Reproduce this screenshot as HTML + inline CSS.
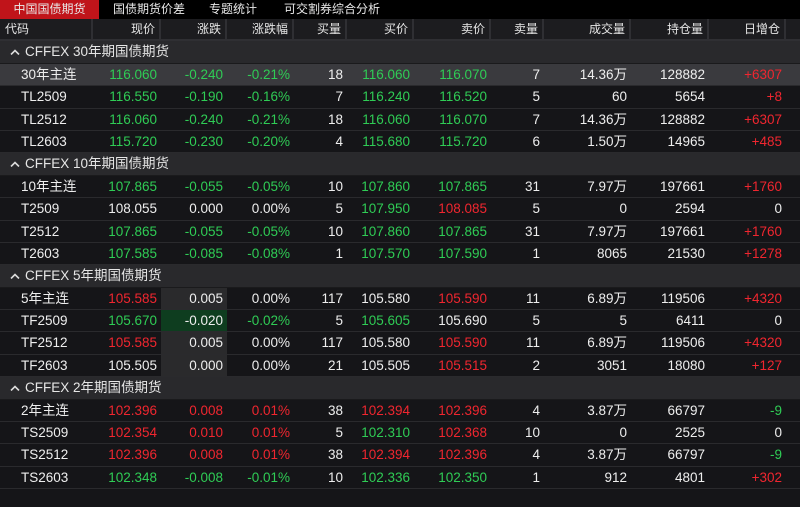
<!DOCTYPE html>
<html><head><meta charset="utf-8"><style>
*{margin:0;padding:0;box-sizing:border-box}
body{width:800px;height:507px;background:#151518;font-family:"Liberation Sans","Noto Sans CJK SC",sans-serif;color:#eee;overflow:hidden;position:relative}
.tabs{height:19px;background:#000;display:flex;font-size:12px;color:#e8e8e8}
.tabs div{height:19px;line-height:18px;padding:0 0}
.t0{width:99px;background:#c0141a;text-align:center}
.t1{width:100px;text-align:center}
.t2{width:60px;text-align:center;margin-left:4px}
.t3{width:130px;text-align:center;margin-left:4px}
.row{display:flex;height:22.4px;line-height:21px;border-bottom:1px solid #2a2a2d;font-size:13.5px;background:#151518}
.row div{text-align:right;padding-right:4px;white-space:nowrap}
.row div:first-child{text-align:left;padding-left:21px}
.hd{background:#1c1c1f;font-size:12px;color:#e6e6e6;border-bottom:2px solid #2f2f33}
.hd div{border-right:2px solid #2f2f33}
.hd div:first-child{padding-left:5px}
.grp{background:#29292c;font-size:13.5px;line-height:21px;height:22.4px;padding-left:10px;color:#e6e6e6;border-bottom:1px solid #1a1a1c}
.grp svg{vertical-align:1px;margin-right:5px}
.sel{background:#3a3a3e}
.c0{width:93px}.c1{width:68px}.c2{width:66px}.c3{width:67px}.c4{width:53px}.c5{width:67px}.c6{width:77px}.c7{width:53px}.c8{width:87px}.c9{width:78px}.c10{width:77px}
.g{color:#2fcc55}.r{color:#f0262f}
.gb{background:#2a2a2c}.gg{background:#0e3d1f}
</style></head><body>
<div class="tabs"><div class="t0">中国国债期货</div><div class="t1">国债期货价差</div><div class="t2">专题统计</div><div class="t3">可交割券综合分析</div></div>
<div class="row hd"><div class="c0">代码</div><div class="c1">现价</div><div class="c2">涨跌</div><div class="c3">涨跌幅</div><div class="c4">买量</div><div class="c5">买价</div><div class="c6">卖价</div><div class="c7">卖量</div><div class="c8">成交量</div><div class="c9">持仓量</div><div class="c10">日增仓</div></div>

<div class="grp"><svg width="10" height="6" viewBox="0 0 10 6"><path d="M1 5.5L5 1.5L9 5.5" stroke="#ddd" stroke-width="1.6" fill="none"/></svg>CFFEX 30年期国债期货</div>
<div class="row sel"><div class="c0">30年主连</div><div class="c1 g">116.060</div><div class="c2 g">-0.240</div><div class="c3 g">-0.21%</div><div class="c4">18</div><div class="c5 g">116.060</div><div class="c6 g">116.070</div><div class="c7">7</div><div class="c8">14.36万</div><div class="c9">128882</div><div class="c10 r">+6307</div></div>
<div class="row"><div class="c0">TL2509</div><div class="c1 g">116.550</div><div class="c2 g">-0.190</div><div class="c3 g">-0.16%</div><div class="c4">7</div><div class="c5 g">116.240</div><div class="c6 g">116.520</div><div class="c7">5</div><div class="c8">60</div><div class="c9">5654</div><div class="c10 r">+8</div></div>
<div class="row"><div class="c0">TL2512</div><div class="c1 g">116.060</div><div class="c2 g">-0.240</div><div class="c3 g">-0.21%</div><div class="c4">18</div><div class="c5 g">116.060</div><div class="c6 g">116.070</div><div class="c7">7</div><div class="c8">14.36万</div><div class="c9">128882</div><div class="c10 r">+6307</div></div>
<div class="row"><div class="c0">TL2603</div><div class="c1 g">115.720</div><div class="c2 g">-0.230</div><div class="c3 g">-0.20%</div><div class="c4">4</div><div class="c5 g">115.680</div><div class="c6 g">115.720</div><div class="c7">6</div><div class="c8">1.50万</div><div class="c9">14965</div><div class="c10 r">+485</div></div>

<div class="grp"><svg width="10" height="6" viewBox="0 0 10 6"><path d="M1 5.5L5 1.5L9 5.5" stroke="#ddd" stroke-width="1.6" fill="none"/></svg>CFFEX 10年期国债期货</div>
<div class="row"><div class="c0">10年主连</div><div class="c1 g">107.865</div><div class="c2 g">-0.055</div><div class="c3 g">-0.05%</div><div class="c4">10</div><div class="c5 g">107.860</div><div class="c6 g">107.865</div><div class="c7">31</div><div class="c8">7.97万</div><div class="c9">197661</div><div class="c10 r">+1760</div></div>
<div class="row"><div class="c0">T2509</div><div class="c1">108.055</div><div class="c2">0.000</div><div class="c3">0.00%</div><div class="c4">5</div><div class="c5 g">107.950</div><div class="c6 r">108.085</div><div class="c7">5</div><div class="c8">0</div><div class="c9">2594</div><div class="c10">0</div></div>
<div class="row"><div class="c0">T2512</div><div class="c1 g">107.865</div><div class="c2 g">-0.055</div><div class="c3 g">-0.05%</div><div class="c4">10</div><div class="c5 g">107.860</div><div class="c6 g">107.865</div><div class="c7">31</div><div class="c8">7.97万</div><div class="c9">197661</div><div class="c10 r">+1760</div></div>
<div class="row"><div class="c0">T2603</div><div class="c1 g">107.585</div><div class="c2 g">-0.085</div><div class="c3 g">-0.08%</div><div class="c4">1</div><div class="c5 g">107.570</div><div class="c6 g">107.590</div><div class="c7">1</div><div class="c8">8065</div><div class="c9">21530</div><div class="c10 r">+1278</div></div>

<div class="grp"><svg width="10" height="6" viewBox="0 0 10 6"><path d="M1 5.5L5 1.5L9 5.5" stroke="#ddd" stroke-width="1.6" fill="none"/></svg>CFFEX 5年期国债期货</div>
<div class="row"><div class="c0">5年主连</div><div class="c1 r">105.585</div><div class="c2 gb">0.005</div><div class="c3">0.00%</div><div class="c4">117</div><div class="c5">105.580</div><div class="c6 r">105.590</div><div class="c7">11</div><div class="c8">6.89万</div><div class="c9">119506</div><div class="c10 r">+4320</div></div>
<div class="row"><div class="c0">TF2509</div><div class="c1 g">105.670</div><div class="c2 gg">-0.020</div><div class="c3 g">-0.02%</div><div class="c4">5</div><div class="c5 g">105.605</div><div class="c6">105.690</div><div class="c7">5</div><div class="c8">5</div><div class="c9">6411</div><div class="c10">0</div></div>
<div class="row"><div class="c0">TF2512</div><div class="c1 r">105.585</div><div class="c2 gb">0.005</div><div class="c3">0.00%</div><div class="c4">117</div><div class="c5">105.580</div><div class="c6 r">105.590</div><div class="c7">11</div><div class="c8">6.89万</div><div class="c9">119506</div><div class="c10 r">+4320</div></div>
<div class="row"><div class="c0">TF2603</div><div class="c1">105.505</div><div class="c2 gb">0.000</div><div class="c3">0.00%</div><div class="c4">21</div><div class="c5">105.505</div><div class="c6 r">105.515</div><div class="c7">2</div><div class="c8">3051</div><div class="c9">18080</div><div class="c10 r">+127</div></div>

<div class="grp"><svg width="10" height="6" viewBox="0 0 10 6"><path d="M1 5.5L5 1.5L9 5.5" stroke="#ddd" stroke-width="1.6" fill="none"/></svg>CFFEX 2年期国债期货</div>
<div class="row"><div class="c0">2年主连</div><div class="c1 r">102.396</div><div class="c2 r">0.008</div><div class="c3 r">0.01%</div><div class="c4">38</div><div class="c5 r">102.394</div><div class="c6 r">102.396</div><div class="c7">4</div><div class="c8">3.87万</div><div class="c9">66797</div><div class="c10 g">-9</div></div>
<div class="row"><div class="c0">TS2509</div><div class="c1 r">102.354</div><div class="c2 r">0.010</div><div class="c3 r">0.01%</div><div class="c4">5</div><div class="c5 g">102.310</div><div class="c6 r">102.368</div><div class="c7">10</div><div class="c8">0</div><div class="c9">2525</div><div class="c10">0</div></div>
<div class="row"><div class="c0">TS2512</div><div class="c1 r">102.396</div><div class="c2 r">0.008</div><div class="c3 r">0.01%</div><div class="c4">38</div><div class="c5 r">102.394</div><div class="c6 r">102.396</div><div class="c7">4</div><div class="c8">3.87万</div><div class="c9">66797</div><div class="c10 g">-9</div></div>
<div class="row"><div class="c0">TS2603</div><div class="c1 g">102.348</div><div class="c2 g">-0.008</div><div class="c3 g">-0.01%</div><div class="c4">10</div><div class="c5 g">102.336</div><div class="c6 g">102.350</div><div class="c7">1</div><div class="c8">912</div><div class="c9">4801</div><div class="c10 r">+302</div></div>
</body></html>
